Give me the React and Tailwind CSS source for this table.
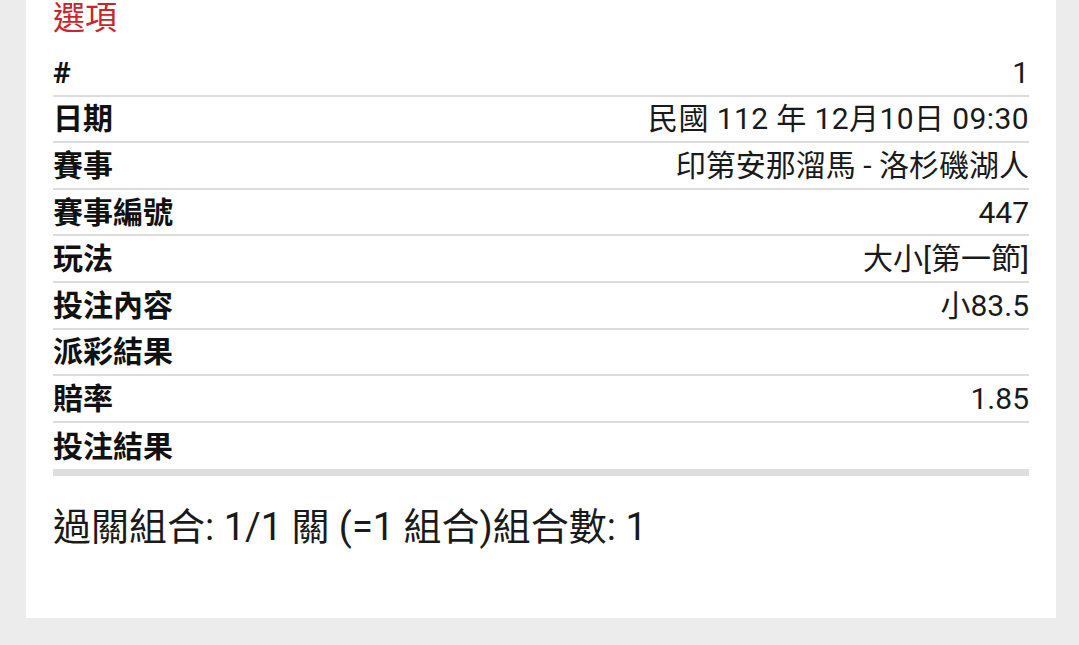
export default function App() {
  const rows = [
    ["#", "1"],
    ["日期", "民國 112 年 12月10日 09:30"],
    ["賽事", "印第安那溜馬 - 洛杉磯湖人"],
    ["賽事編號", "447"],
    ["玩法", "大小[第一節]"],
    ["投注內容", "小83.5"],
    ["派彩結果", ""],
    ["賠率", "1.85"],
    ["投注結果", ""],
  ];
  return (
    <div
      className="w-[1079px] h-[645px] bg-[#ececec] overflow-hidden"
      style={{ fontFamily: 'Roboto, "Noto Sans CJK TC", sans-serif' }}
    >
      <div className="ml-[26px] w-[1030px] h-[618px] bg-white px-[27px] pt-0 flex flex-col">
        <div className="text-[32px] leading-[36px] text-[#c8262c]">選項</div>
        <div className="mt-[14px]">
          {rows.map(([k, v], i) => (
            <div
              key={i}
              className={
                "h-[46.6px] flex items-center justify-between " +
                (i < rows.length - 1 ? "border-b-2 border-[#dcdcdc]" : "")
              }
            >
              <span className="text-[30px] font-bold text-[#111]">{k}</span>
              <span className={"text-[30px] text-[#1a1a1a] " + (i === 1 ? "tracking-[0.4px]" : "")}>{v}</span>
            </div>
          ))}
        </div>
        <div className="h-[7px] bg-[#dedede]"></div>
        <div className="mt-[29px] text-[38px] leading-[44px] text-[#1a1a1a]">
          過關組合: 1/1 關 (=1 組合)組合數: 1
        </div>
      </div>
    </div>
  );
}
